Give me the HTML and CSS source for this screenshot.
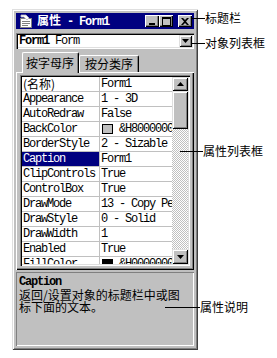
FILE: index.html
```html
<!DOCTYPE html>
<html>
<head>
<meta charset="utf-8">
<link rel="stylesheet" href="styles.css">
</head>
<body>
<div class="stage">
  <div class="window">
    <div class="titlebar">
      <svg class="ticon" width="14" height="14" viewBox="0 0 14 14">
        <rect x="1.5" y="4.5" width="11" height="9" fill="#fff" stroke="#808080"/>
        <line x1="3" y1="7.5" x2="11" y2="7.5" stroke="#808080"/>
        <line x1="3" y1="9.5" x2="11" y2="9.5" stroke="#808080"/>
        <line x1="3" y1="11.5" x2="9" y2="11.5" stroke="#808080"/>
        <path d="M2 1 L7 1 L10 4 L8 6 L5 3 L2 3 Z" fill="#fff" stroke="#c0c0c0" stroke-width="0.8"/>
      </svg>
      <span class="ttext"><span class="tcn">属性</span><span class="ten"> - Form1</span></span>
      <div class="tbtns">
        <span class="tbtn"><svg width="8" height="8" viewBox="0 0 8 8"><rect x="1" y="6" width="6" height="2" fill="#000"/></svg></span>
        <span class="tbtn"><svg width="9" height="9" viewBox="0 0 9 9"><rect x="0.5" y="0.5" width="8" height="8" fill="none" stroke="#000"/><rect x="0" y="0" width="9" height="2" fill="#000"/></svg></span>
        <span class="tbtn close"><svg width="8" height="7" viewBox="0 0 8 7"><path d="M0 0 L2 0 L4 2 L6 0 L8 0 L5 3.5 L8 7 L6 7 L4 5 L2 7 L0 7 L3 3.5 Z" fill="#000"/></svg></span>
      </div>
    </div>

    <div class="combo">
      <span class="combo-text"><b>Form1</b> Form</span>
      <span class="sbtn combo-btn"><svg width="7" height="4" viewBox="0 0 7 4"><path d="M0 0 L7 0 L3.5 4 Z" fill="#000"/></svg></span>
    </div>

    <div class="tabs">
      <span class="tab active">按字母序</span>
      <span class="tab">按分类序</span>
    </div>

    <div class="panel">
      <div class="grid">
        <div class="rows">
          <div class="row"><div class="name cn">(名称)</div><div class="val">Form1</div></div>
          <div class="row"><div class="name">Appearance</div><div class="val">1 - 3D</div></div>
          <div class="row"><div class="name">AutoRedraw</div><div class="val">False</div></div>
          <div class="row"><div class="name">BackColor</div><div class="val"><span class="swatch gray"></span>&amp;H80000005&amp;</div></div>
          <div class="row"><div class="name">BorderStyle</div><div class="val">2 - Sizable</div></div>
          <div class="row"><div class="name sel">Caption</div><div class="val">Form1</div></div>
          <div class="row"><div class="name">ClipControls</div><div class="val">True</div></div>
          <div class="row"><div class="name">ControlBox</div><div class="val">True</div></div>
          <div class="row"><div class="name">DrawMode</div><div class="val">13 - Copy Pen</div></div>
          <div class="row"><div class="name">DrawStyle</div><div class="val">0 - Solid</div></div>
          <div class="row"><div class="name">DrawWidth</div><div class="val">1</div></div>
          <div class="row"><div class="name">Enabled</div><div class="val">True</div></div>
          <div class="row"><div class="name">FillColor</div><div class="val"><span class="swatch black"></span>&amp;H00000000&amp;</div></div>
        </div>
        <div class="scrollbar">
          <span class="sbtn up"><svg width="7" height="4" viewBox="0 0 7 4"><path d="M0 4 L7 4 L3.5 0 Z" fill="#000"/></svg></span>
          <span class="thumb"></span>
          <span class="track"></span>
          <span class="sbtn down"><svg width="7" height="4" viewBox="0 0 7 4"><path d="M0 0 L7 0 L3.5 4 Z" fill="#000"/></svg></span>
        </div>
      </div>
    </div>

    <div class="desc">
      <div class="desc-title">Caption</div>
      <div class="desc-text">返回/设置对象的标题栏中或图<br>标下面的文本。</div>
    </div>
  </div>

  <div class="callout c1"><span class="cline"></span><span class="clabel">标题栏</span></div>
  <div class="callout c2"><span class="cline"></span><span class="clabel">对象列表框</span></div>
  <div class="callout c3"><span class="cline"></span><span class="clabel">属性列表框</span></div>
  <div class="callout c4"><span class="cline"></span><span class="clabel">属性说明</span></div>
</div>
</body>
</html>
```

FILE: styles.css
```css
* { box-sizing: border-box; }

body {
  margin: 0;
  background: #fff;
  font-family: "Noto Sans CJK SC", sans-serif;
  color: #000;
}

.stage {
  position: relative;
  width: 277px;
  height: 358px;
  overflow: hidden;
  padding: 9px 0 0 12px;
}

.window {
  width: 186px;
  height: 341px;
  background: #c0c0c0;
  padding: 4px 4px 4px 4px;
  box-shadow: inset 1px 1px 0 #dfdfdf, inset -1px -1px 0 #404040,
              inset 2px 2px 0 #fff, inset -2px -2px 0 #808080;
  display: flex;
  flex-direction: column;
}

/* Title bar */
.titlebar {
  height: 16px;
  background: #000080;
  display: flex;
  align-items: center;
  padding: 0 2px 0 3px;
  color: #fff;
}
.ticon { flex: none; margin-right: 4px; }
.ttext {
  flex: 1;
  font-weight: bold;
  font-size: 12px;
  line-height: 16px;
  white-space: nowrap;
}
.tcn { font-family: "Noto Sans CJK SC", sans-serif; }
.ten {
  font-family: "Liberation Mono", monospace;
  letter-spacing: -1.2px;
}
.tbtns { display: flex; align-items: center; }
.tbtn {
  width: 14px;
  height: 12px;
  background: #c0c0c0;
  display: flex;
  align-items: center;
  justify-content: center;
  box-shadow: inset 1px 1px 0 #fff, inset -1px -1px 0 #000, inset -2px -2px 0 #808080;
}
.tbtn.close { margin-left: 5px; }

/* Combo */
.combo {
  margin-top: 4px;
  height: 16px;
  background: #fff;
  display: flex;
  align-items: center;
  padding: 2px 2px 2px 3px;
  box-shadow: inset 1px 1px 0 #808080, inset 2px 2px 0 #000, inset -1px -1px 0 #fff, inset -2px -2px 0 #dfdfdf;
}
.combo-text {
  flex: 1;
  font-family: "Liberation Mono", monospace;
  font-size: 12px;
  letter-spacing: -1.2px;
  line-height: 12px;
  white-space: nowrap;
}
.sbtn {
  background: #c0c0c0;
  display: flex;
  align-items: center;
  justify-content: center;
  box-shadow: inset 1px 1px 0 #dfdfdf, inset -1px -1px 0 #000, inset 2px 2px 0 #fff, inset -2px -2px 0 #808080;
  flex: none;
}
.combo-btn { width: 13px; height: 12px; }

/* Tabs */
.tabs {
  margin-top: 3px;
  height: 20px;
  display: flex;
  align-items: flex-end;
  padding-left: 6px;
  position: relative;
  z-index: 1;
}
.tab {
  height: 17px;
  padding: 0 5px;
  font-size: 12px;
  line-height: 16px;
  background: #c0c0c0;
  border-top: 1px solid #fff;
  border-left: 1px solid #fff;
  border-right: 1px solid #000;
  border-radius: 2px 2px 0 0;
  box-shadow: inset -1px 0 0 #808080;
  white-space: nowrap;
}
.tab.active {
  height: 21px;
  margin-bottom: -1px;
  padding: 2px 4px 0 3px;
  line-height: 16px;
}

/* Panel */
.panel {
  height: 198px;
  padding: 3px 0 2px 4px;
  box-shadow: inset 1px 1px 0 #fff, inset -1px -1px 0 #000, inset -2px -2px 0 #808080;
}
.grid {
  height: 191px;
  width: 170px;
  padding: 2px;
  background: #fff;
  display: flex;
  box-shadow: inset 1px 1px 0 #808080, inset 2px 2px 0 #000, inset -1px -1px 0 #fff, inset -2px -2px 0 #dfdfdf;
  overflow: hidden;
}
.rows {
  width: 150px;
  height: 187px;
  overflow: hidden;
}
.row {
  display: flex;
  height: 15px;
  border-bottom: 1px solid #c0c0c0;
  font-family: "Liberation Mono", monospace;
  font-size: 12px;
  letter-spacing: -1.2px;
  line-height: 14px;
  white-space: nowrap;
}
.name {
  width: 78px;
  flex: none;
  padding-left: 1px;
  border-right: 1px solid #c0c0c0;
  overflow: hidden;
}
.name.cn {
  font-family: "Noto Sans CJK SC", sans-serif;
  letter-spacing: 0;
}
.name.sel { background: #000080; color: #fff; }
.val {
  flex: 1;
  padding-left: 1px;
  overflow: hidden;
  display: flex;
  align-items: center;
}
.swatch {
  display: inline-block;
  width: 11px;
  height: 10px;
  border: 1px solid #000;
  margin: 0 6px 0 1px;
  flex: none;
}
.swatch.gray { background: #c0c0c0; }
.swatch.black { background: #000; }

/* Scrollbar */
.scrollbar {
  width: 16px;
  height: 187px;
  display: flex;
  flex-direction: column;
  background: repeating-conic-gradient(#c0c0c0 0 25%, #fff 0 50%) 0 0 / 2px 2px;
}
.scrollbar .up { height: 14px; width: 16px; }
.scrollbar .thumb {
  height: 38px;
  background: #c0c0c0;
  box-shadow: inset 1px 1px 0 #dfdfdf, inset -1px -1px 0 #000, inset 2px 2px 0 #fff, inset -2px -2px 0 #808080;
}
.scrollbar .track { flex: 1; }
.scrollbar .down { height: 15px; width: 16px; }

/* Description */
.desc {
  margin-top: 2px;
  height: 74px;
  padding: 4px 3px 3px 3px;
  box-shadow: inset 1px 1px 0 #808080, inset -1px -1px 0 #fff;
}
.desc-title {
  font-family: "Liberation Mono", monospace;
  font-weight: bold;
  font-size: 12px;
  letter-spacing: -1.2px;
  line-height: 12px;
  height: 13px;
}
.desc-text {
  font-size: 12px;
  line-height: 12px;
}

/* Callouts */
.callout {
  position: absolute;
  display: flex;
  align-items: center;
  height: 16px;
}
.cline {
  height: 1px;
  background: #000;
  flex: none;
}
.clabel {
  font-size: 12px;
  line-height: 16px;
  white-space: nowrap;
}
.c1 { left: 192px; top: 10px; }
.c1 .cline { width: 13px; }
.c2 { left: 192px; top: 35px; }
.c2 .cline { width: 13px; }
.c3 { left: 180px; top: 143px; }
.c3 .cline { width: 23px; }
.c4 { left: 165px; top: 299px; }
.c4 .cline { width: 35px; }
```
